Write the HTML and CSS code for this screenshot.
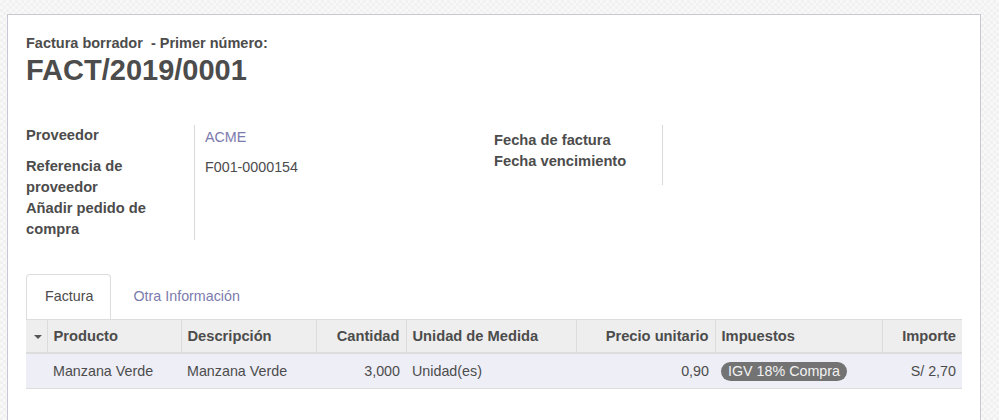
FILE: index.html
```html
<!DOCTYPE html>
<html lang="es">
<head>
<meta charset="utf-8">
<title>Factura borrador</title>
<link rel="stylesheet" href="styles.css">
</head>
<body>
<div class="sheet">
  <div class="title">
    <div class="subtitle">Factura borrador&nbsp; - Primer número:</div>
    <h1 class="number">FACT/2019/0001</h1>
  </div>

  <div class="groups">
    <div class="group group-left">
      <div class="label row1">Proveedor</div>
      <div class="value row1"><span class="link acme">ACME</span></div>
      <div class="label">Referencia de proveedor</div>
      <div class="value">F001-0000154</div>
      <div class="label">Añadir pedido de compra</div>
      <div class="value"></div>
    </div>
    <div class="group group-right">
      <div class="label first">Fecha de factura</div>
      <div class="value first"></div>
      <div class="label last">Fecha vencimiento</div>
      <div class="value last"></div>
    </div>
  </div>

  <div class="tabs">
    <div class="tab active">Factura</div>
    <div class="tab link">Otra Información</div>
  </div>

  <table class="lines">
    <colgroup>
      <col style="width:21px">
      <col style="width:134px">
      <col style="width:135px">
      <col style="width:90px">
      <col style="width:170px">
      <col style="width:139px">
      <col style="width:167px">
      <col style="width:80px">
    </colgroup>
    <thead>
      <tr>
        <th class="handle"><span class="caret"></span></th>
        <th>Producto</th>
        <th>Descripción</th>
        <th class="num">Cantidad</th>
        <th>Unidad de Medida</th>
        <th class="num">Precio unitario</th>
        <th>Impuestos</th>
        <th class="num">Importe</th>
      </tr>
    </thead>
    <tbody>
      <tr>
        <td></td>
        <td>Manzana Verde</td>
        <td>Manzana Verde</td>
        <td class="num">3,000</td>
        <td>Unidad(es)</td>
        <td class="num">0,90</td>
        <td><span class="badge">IGV 18% Compra</span></td>
        <td class="num">S/ 2,70</td>
      </tr>
    </tbody>
  </table>
</div>
</body>
</html>
```

FILE: styles.css
```css
html, body {
  margin: 0;
  padding: 0;
}

body {
  font-family: "Liberation Sans", Arial, sans-serif;
  font-size: 14.3px;
  color: #4c4c4c;
  background-color: #f5f5f5;
  background-image: conic-gradient(#f1f1f1 25%, #f8f8f8 0 50%, #f1f1f1 0 75%, #f8f8f8 0);
  background-size: 6px 6px;
  height: 420px;
  overflow: hidden;
}

.sheet {
  box-sizing: border-box;
  width: 974px;
  margin: 14px 0 0 7px;
  min-height: 460px;
  background: #fff;
  border: 1px solid #c9c7d3;
  border-bottom: none;
  padding: 19px 18px 0 18px;
}

.subtitle {
  font-weight: bold;
  font-size: 14.5px;
  line-height: 18px;
  color: #4c4c4c;
}

.number {
  margin: 1px 0 0 0;
  font-size: 29px;
  line-height: 34px;
  font-weight: bold;
  color: #4c4c4c;
}

.groups {
  display: flex;
  margin-top: 38px;
}

.group {
  width: 468px;
  display: grid;
  grid-template-columns: 169px 1fr;
  line-height: 21px;
  align-content: start;
}

.label {
  font-weight: bold;
  font-size: 14.7px;
  border-right: 1px solid #d9d9d9;
  padding-right: 10px;
}

.value {
  padding-left: 10px;
}

.group-left .row1 {
  height: 31px;
}

.acme {
  display: inline-block;
  padding-top: 2px;
}

.group-left .value:nth-child(4) {
  padding-top: 1px;
}

.group-right .first {
  padding-top: 5px;
}

.group-right .last {
  padding-bottom: 13px;
}

.link {
  color: #7c7bad;
}

.tabs {
  display: flex;
  gap: 3px;
  margin-top: 34px;
}

.tab {
  padding: 11px 17px 12px 18px;
  line-height: 21px;
  border: 1px solid transparent;
  border-bottom: none;
  border-radius: 4px 4px 0 0;
}

.tab.active {
  border-color: #dddddd;
  background: #fff;
  color: #4c4c4c;
}

.lines {
  width: 936px;
  table-layout: fixed;
  border-collapse: collapse;
  border-top: 1px solid #dddddd;
}

.lines th {
  background: #eeeeee;
  font-weight: bold;
  font-size: 14.7px;
  text-align: left;
  height: 32px;
  padding: 0 6px;
  border-left: 1px solid #dcdcdc;
  border-bottom: 2px solid #dddddd;
  white-space: nowrap;
  overflow: hidden;
}

.lines th:first-child {
  border-left: none;
}

.lines th.handle {
  padding: 0;
  text-align: center;
}

.caret {
  display: inline-block;
  width: 0;
  height: 0;
  border-left: 4px solid transparent;
  border-right: 4px solid transparent;
  border-top: 4px solid #555;
  vertical-align: middle;
  margin-left: 3px;
}

.lines td {
  background: #eeeef6;
  height: 34px;
  padding: 0 6px;
  border-bottom: 1px solid #dddddd;
  white-space: nowrap;
}

.lines .num {
  text-align: right;
}

.badge {
  display: inline-block;
  background: #737373;
  color: #f2f2f2;
  border-radius: 10px;
  padding: 0 7px;
  line-height: 19px;
}
```
